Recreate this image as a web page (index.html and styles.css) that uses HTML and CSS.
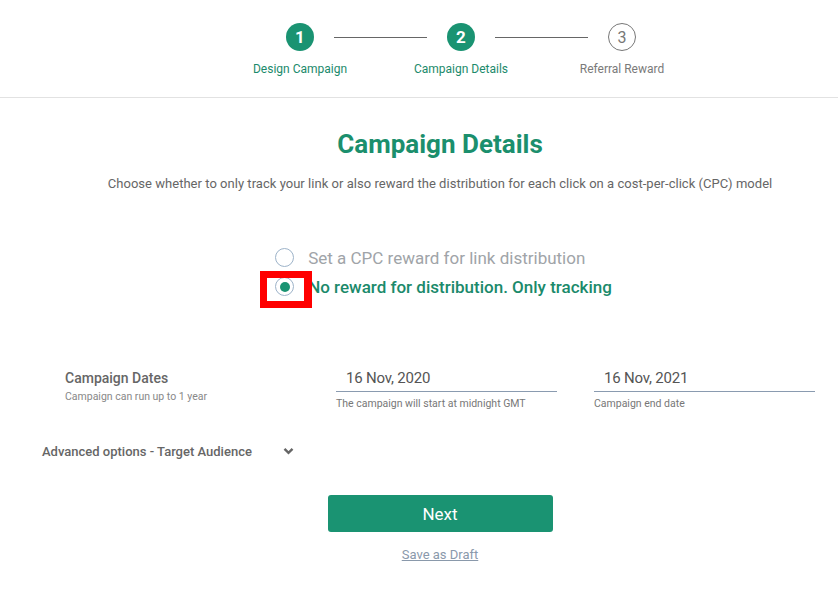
FILE: index.html
```html
<!DOCTYPE html>
<html>
<head>
<meta charset="utf-8">
<link rel="stylesheet" href="styles.css">
</head>
<body>
<header class="header">
  <div class="stepper">
    <div class="step done">
      <div class="circle">1</div>
      <div class="step-label">Design Campaign</div>
    </div>
    <div class="step-line"></div>
    <div class="step done">
      <div class="circle">2</div>
      <div class="step-label">Campaign Details</div>
    </div>
    <div class="step-line"></div>
    <div class="step todo">
      <div class="circle">3</div>
      <div class="step-label">Referral Reward</div>
    </div>
  </div>
</header>
<main class="main">
  <h1 class="title">Campaign Details</h1>
  <p class="subtitle">Choose whether to only track your link or also reward the distribution for each click on a cost-per-click (CPC) model</p>
  <div class="radio-group">
    <label class="radio-row">
      <span class="radio"></span>
      <span class="radio-text">Set a CPC reward for link distribution</span>
    </label>
    <label class="radio-row selected">
      <span class="radio"><span class="dot"></span><span class="highlight"></span></span>
      <span class="radio-text">No reward for distribution. Only tracking</span>
    </label>
  </div>
</main>
<section class="dates-row">
  <div class="dates-label">
    <div class="dates-title">Campaign Dates</div>
    <div class="dates-sub">Campaign can run up to 1 year</div>
  </div>
  <div class="field">
    <div class="field-input">16 Nov, 2020</div>
    <div class="field-help">The campaign will start at midnight GMT</div>
  </div>
  <div class="field">
    <div class="field-input">16 Nov, 2021</div>
    <div class="field-help">Campaign end date</div>
  </div>
</section>
<div class="advanced">
  <span class="advanced-text">Advanced options - Target Audience</span>
  <svg class="chevron" width="11" height="8" viewBox="0 0 11 8"><path d="M1.5 1.8 L5.5 5.8 L9.5 1.8" fill="none" stroke="#666" stroke-width="2.4"/></svg>
</div>
<div class="actions">
  <button class="next-btn">Next</button>
  <a class="draft" href="#">Save as Draft</a>
</div>
</body>
</html>
```

FILE: styles.css
```css
* { box-sizing: border-box; }
body {
  margin: 0;
  font-family: Roboto, "Liberation Sans", Arial, sans-serif;
  background: #fff;
  color: #555;
}
.header {
  border-bottom: 1px solid #e2e2e2;
  height: 98px;
  padding-top: 23px;
}
.stepper {
  display: flex;
  justify-content: center;
  align-items: flex-start;
  padding-left: 84px;
}
.step {
  width: 28px;
  display: flex;
  flex-direction: column;
  align-items: center;
}
.circle {
  width: 28px;
  height: 28px;
  border-radius: 50%;
  display: flex;
  align-items: center;
  justify-content: center;
  font-size: 17px;
  font-weight: 700;
}
.done .circle {
  background: #1a9372;
  color: #fff;
}
.todo .circle {
  border: 1px solid #777;
  color: #777;
  font-weight: 400;
  font-size: 16px;
}
.step-label {
  white-space: nowrap;
  margin-top: 10px;
  font-size: 12px;
  line-height: 16px;
}
.done .step-label { color: #1b8a6b; }
.todo .step-label { color: #7a7a7a; }
.step-line {
  width: 93px;
  height: 1px;
  background: #666;
  margin: 14px 20px 0;
}
.main {
  display: flex;
  flex-direction: column;
  align-items: center;
  padding-left: 42px;
}
.title {
  margin: 31px 0 0;
  font-size: 26px;
  line-height: 30px;
  font-weight: 700;
  color: #1b8f6d;
}
.subtitle {
  margin: 16px 0 0;
  font-size: 13px;
  line-height: 18px;
  color: #666;
  letter-spacing: 0.03px;
}
.radio-group {
  margin-top: 50px;
  display: flex;
  flex-direction: column;
  align-items: flex-start;
  margin-left: 7px;
}
.radio-row {
  display: flex;
  align-items: center;
  height: 29px;
}
.radio {
  position: relative;
  width: 19px;
  height: 19px;
  border: 1px solid #9db3c9;
  border-radius: 50%;
  display: flex;
  align-items: center;
  justify-content: center;
  margin-right: 14px;
}
.dot {
  width: 10px;
  height: 10px;
  border-radius: 50%;
  background: #1a9372;
}
.highlight {
  position: absolute;
  left: -16px;
  top: -7px;
  width: 52px;
  height: 37px;
  border: 7px solid #ff0000;
  border-right-width: 8px;
}
.radio-text {
  font-size: 17px;
  color: #a0a4a8;
}
.selected .radio-text {
  color: #1b8a6b;
  font-weight: 500;
}
.dates-row {
  display: flex;
  align-items: flex-start;
  gap: 37px;
  margin-top: 67px;
  padding-left: 65px;
}
.dates-label {
  width: 234px;
  flex-shrink: 0;
}
.dates-title {
  font-size: 14px;
  line-height: 20px;
  font-weight: 500;
  color: #666;
}
.dates-sub {
  margin-top: 2px;
  font-size: 10.5px;
  line-height: 14px;
  color: #888;
}
.field {
  width: 221px;
  flex-shrink: 0;
}
.field-input {
  font-size: 15px;
  line-height: 20px;
  height: 24px;
  padding-left: 10px;
  color: #555;
  border-bottom: 1px solid #8a9bb0;
  letter-spacing: -0.2px;
}
.field-help {
  margin-top: 5px;
  font-size: 10.5px;
  line-height: 14px;
  color: #777;
}
.advanced {
  display: flex;
  align-items: center;
  margin-top: 31px;
  padding-left: 42px;
  height: 18px;
}
.advanced-text {
  font-size: 13px;
  font-weight: 500;
  color: #666;
}
.chevron { margin-left: 31px; }
.actions {
  display: flex;
  flex-direction: column;
  align-items: center;
  padding-left: 42px;
  margin-top: 35px;
}
.next-btn {
  width: 225px;
  height: 37px;
  border: none;
  border-radius: 3px;
  background: #1a9372;
  color: #fff;
  font-family: Roboto, "Liberation Sans", Arial, sans-serif;
  font-size: 17px;
}
.draft {
  margin-top: 15px;
  font-size: 13px;
  line-height: 16px;
  color: #8a99ab;
  text-decoration: underline;
}
```
